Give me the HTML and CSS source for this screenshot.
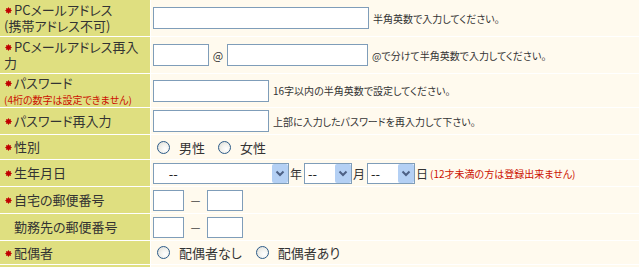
FILE: index.html
```html
<!DOCTYPE html>
<html>
<head>
    <title>会員登録</title>
    <meta charset="UTF-8">
    <meta name="viewport" content="width=device-width, initial-scale=1.0">
    <link rel="stylesheet" href="styles.css">
</head>
<body>

<table class="form">
  <tr class="h36">
    <th><svg class="req" viewBox="0 0 7 7"><polygon points="3.5,0 4.4,1.4 6,1 5.6,2.6 7,3.5 5.6,4.4 6,6 4.4,5.6 3.5,7 2.6,5.6 1,6 1.4,4.4 0,3.5 1.4,2.6 1,1 2.6,1.4"/></svg>PCメールアドレス<br>(携帯アドレス不可)</th>
    <td><div class="field"><input type="text" class="in-mail"><span class="note">半角英数で入力してください。</span></div></td>
  </tr>
  <tr class="h36">
    <th><svg class="req" viewBox="0 0 7 7"><polygon points="3.5,0 4.4,1.4 6,1 5.6,2.6 7,3.5 5.6,4.4 6,6 4.4,5.6 3.5,7 2.6,5.6 1,6 1.4,4.4 0,3.5 1.4,2.6 1,1 2.6,1.4"/></svg>PCメールアドレス再入<br>力</th>
    <td><div class="field"><input type="text" class="in-user"><span class="at">@</span><input type="text" class="in-domain"><span class="note">@で分けて半角英数で入力してください。</span></div></td>
  </tr>
  <tr class="h33">
    <th><svg class="req" viewBox="0 0 7 7"><polygon points="3.5,0 4.4,1.4 6,1 5.6,2.6 7,3.5 5.6,4.4 6,6 4.4,5.6 3.5,7 2.6,5.6 1,6 1.4,4.4 0,3.5 1.4,2.6 1,1 2.6,1.4"/></svg>パスワード<br><span class="warn">(4桁の数字は設定できません)</span></th>
    <td><div class="field"><input type="password" class="in-pass"><span class="note">16字以内の半角英数で設定してください。</span></div></td>
  </tr>
  <tr class="h26">
    <th><svg class="req" viewBox="0 0 7 7"><polygon points="3.5,0 4.4,1.4 6,1 5.6,2.6 7,3.5 5.6,4.4 6,6 4.4,5.6 3.5,7 2.6,5.6 1,6 1.4,4.4 0,3.5 1.4,2.6 1,1 2.6,1.4"/></svg>パスワード再入力</th>
    <td><div class="field"><input type="password" class="in-pass"><span class="note">上部に入力したパスワードを再入力して下さい。</span></div></td>
  </tr>
  <tr class="h24">
    <th><svg class="req" viewBox="0 0 7 7"><polygon points="3.5,0 4.4,1.4 6,1 5.6,2.6 7,3.5 5.6,4.4 6,6 4.4,5.6 3.5,7 2.6,5.6 1,6 1.4,4.4 0,3.5 1.4,2.6 1,1 2.6,1.4"/></svg>性別</th>
    <td><div class="field">
      <label class="choice"><input type="radio" name="sex">男性</label>
      <label class="choice"><input type="radio" name="sex">女性</label>
    </div></td>
  </tr>
  <tr class="h26">
    <th><svg class="req" viewBox="0 0 7 7"><polygon points="3.5,0 4.4,1.4 6,1 5.6,2.6 7,3.5 5.6,4.4 6,6 4.4,5.6 3.5,7 2.6,5.6 1,6 1.4,4.4 0,3.5 1.4,2.6 1,1 2.6,1.4"/></svg>生年月日</th>
    <td><div class="field">
      <span class="sel sel-year"><select><option>&nbsp;&nbsp;&nbsp;&nbsp;--</option></select><span class="drop"><svg viewBox="0 0 16 18"><polyline points="4.5,7 8,10.5 11.5,7" /></svg></span></span>
      <span class="unit">年</span>
      <span class="sel sel-small"><select><option>--</option></select><span class="drop"><svg viewBox="0 0 16 18"><polyline points="4.5,7 8,10.5 11.5,7" /></svg></span></span>
      <span class="unit">月</span>
      <span class="sel sel-small"><select><option>--</option></select><span class="drop"><svg viewBox="0 0 16 18"><polyline points="4.5,7 8,10.5 11.5,7" /></svg></span></span>
      <span class="unit">日</span>
      <span class="warn">(12才未満の方は登録出来ません)</span>
    </div></td>
  </tr>
  <tr class="h26">
    <th><svg class="req" viewBox="0 0 7 7"><polygon points="3.5,0 4.4,1.4 6,1 5.6,2.6 7,3.5 5.6,4.4 6,6 4.4,5.6 3.5,7 2.6,5.6 1,6 1.4,4.4 0,3.5 1.4,2.6 1,1 2.6,1.4"/></svg>自宅の郵便番号</th>
    <td><div class="field"><input type="text" class="in-zip1"><span class="dash">－</span><input type="text" class="in-zip2"></div></td>
  </tr>
  <tr class="h26">
    <th><span class="no-req"></span>勤務先の郵便番号</th>
    <td><div class="field"><input type="text" class="in-zip1"><span class="dash">－</span><input type="text" class="in-zip2"></div></td>
  </tr>
  <tr class="h23">
    <th><svg class="req" viewBox="0 0 7 7"><polygon points="3.5,0 4.4,1.4 6,1 5.6,2.6 7,3.5 5.6,4.4 6,6 4.4,5.6 3.5,7 2.6,5.6 1,6 1.4,4.4 0,3.5 1.4,2.6 1,1 2.6,1.4"/></svg>配偶者</th>
    <td><div class="field">
      <label class="choice wide"><input type="radio" name="spouse">配偶者なし</label>
      <label class="choice"><input type="radio" name="spouse">配偶者あり</label>
    </div></td>
  </tr>
  <tr class="h26">
    <th>&nbsp;</th>
    <td>&nbsp;</td>
  </tr>
</table>

</body>
</html>
```

FILE: styles.css
```css
/* Basic Reset */
* {
    box-sizing: border-box;
}

body {
    margin: 0;
    background: #ffffff;
    color: #333;
    font-family: "Noto Sans CJK JP", "Noto Sans", sans-serif;
    font-feature-settings: "palt";
}

/* Form table */
.form {
    border-collapse: separate;
    border-spacing: 0;
    width: 640px;
}

.form th {
    width: 151px;
    padding: 0 0 0 4px;
    background: #dfdf80;
    border-right: 1px solid #fff;
    border-bottom: 1px solid #fff;
    text-align: left;
    font-weight: normal;
    font-size: 13px;
    line-height: 16px;
    vertical-align: middle;
}

.form td {
    padding: 0 0 0 2px;
    background: #fffaee;
    border-bottom: 1px solid #fff;
    font-size: 10px;
    vertical-align: middle;
}

.h36 { height: 37px; }
.h33 { height: 34px; }
.h26 { height: 27px; }
.h24 { height: 25px; }
.h23 { height: 24px; }

/* Required mark */
.req {
    display: inline-block;
    width: 7px;
    height: 7px;
    margin: 0 2px 1px 1px;
    fill: #c00000;
    vertical-align: middle;
}

.no-req {
    display: inline-block;
    width: 10px;
}

.warn {
    color: #cc1100;
    font-size: 10px;
    line-height: 13px;
}

/* Field rows */
.field {
    display: flex;
    align-items: center;
}

.note {
    margin-left: 4px;
    font-size: 10px;
    white-space: nowrap;
}

.form input[type=text],
.form input[type=password] {
    height: 22px;
    margin: 0;
    border: 1px solid #7f9db9;
    background: #fff;
    padding: 1px 2px;
}

.in-mail { width: 216px; }
.in-user { width: 56px; }
.in-domain { width: 141px; }
.in-pass { width: 116px; }
.in-zip1 { width: 31px; height: 21px !important; }
.in-zip2 { width: 36px; height: 21px !important; }

.at {
    width: 18px;
    text-align: center;
    font-size: 11px;
}

.dash {
    width: 23px;
    text-align: center;
    font-size: 12px;
    color: #444;
}

/* Radios */
.choice {
    display: flex;
    align-items: center;
    font-size: 13px;
    margin-right: 9px;
}

.choice.wide {
    margin-right: 10px;
}

.choice input {
    appearance: none;
    -webkit-appearance: none;
    width: 13px;
    height: 13px;
    margin: 0 9px 0 4px;
    border: 1px solid #2c5b88;
    border-radius: 50%;
    background: radial-gradient(circle at 65% 65%, #ffffff 0, #f2f2ee 45%, #d8d8d2 100%);
}

/* Selects */
.sel {
    position: relative;
    display: inline-block;
    height: 21px;
}

.sel select {
    appearance: none;
    -webkit-appearance: none;
    height: 21px;
    margin: 0;
    border: 1px solid #7f9db9;
    background: #fff;
    font-family: inherit;
    font-size: 13px;
    color: #222;
    padding: 0 0 0 3px;
}

.sel-year select { width: 136px; }
.sel-small select { width: 48px; }

.drop {
    position: absolute;
    right: 1px;
    top: 1px;
    width: 16px;
    height: 19px;
    background: #b4d0f4;
    border-radius: 2px;
}

.drop svg {
    width: 16px;
    height: 19px;
    fill: none;
    stroke: #4d6185;
    stroke-width: 2;
}

.unit {
    font-size: 12px;
    margin: 0 2px 0 1px;
}
```
